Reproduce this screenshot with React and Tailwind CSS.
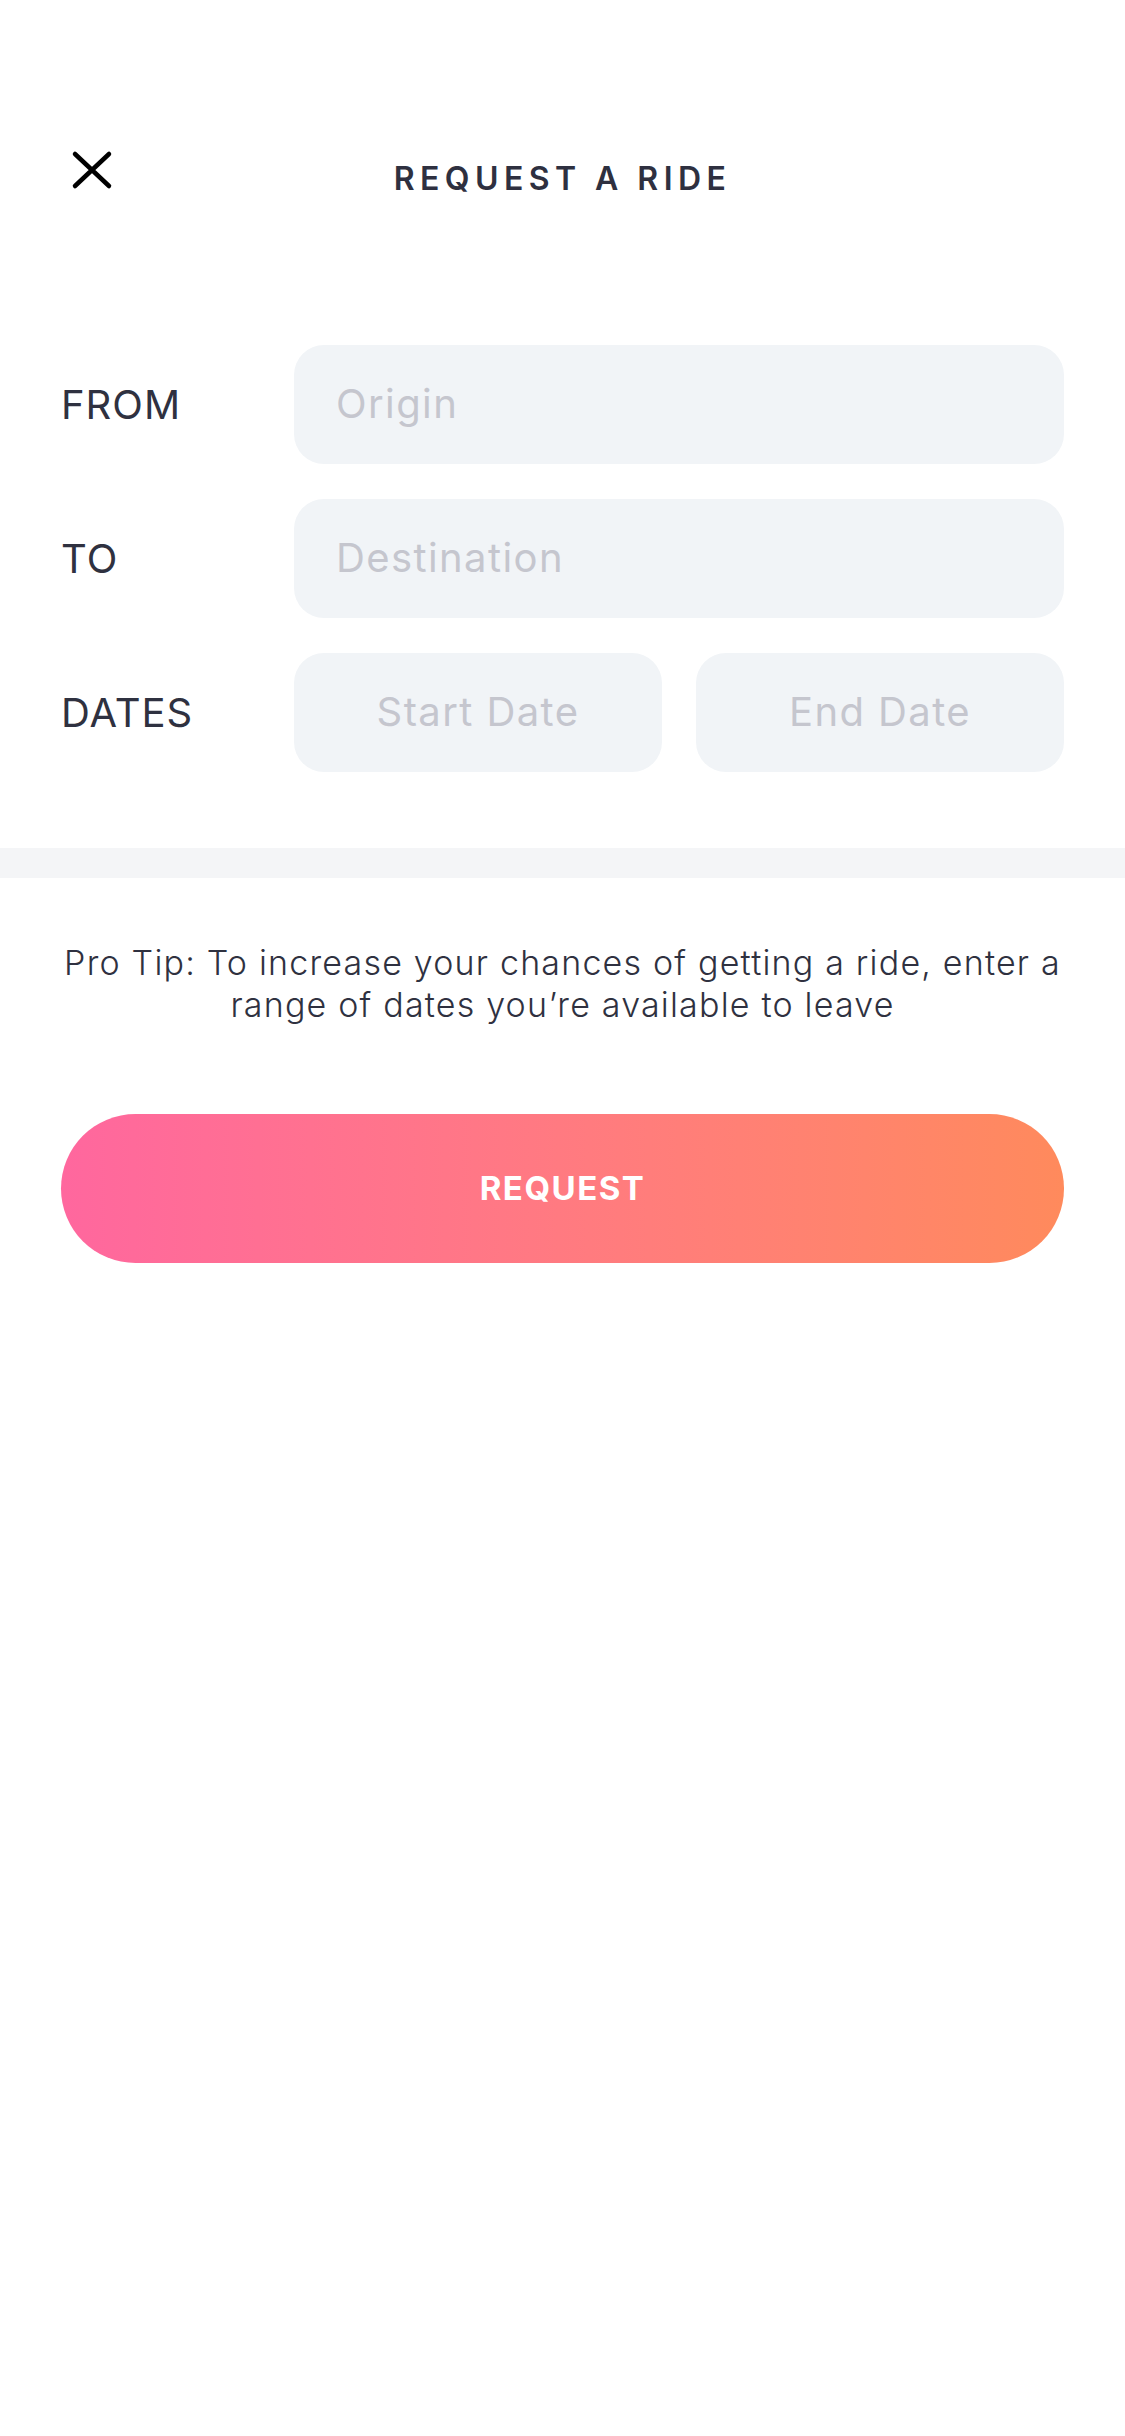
import React from 'react';

function CloseIcon() {
  return (
    <svg width="44" height="44" viewBox="0 0 44 44" fill="none">
      <path d="M4 6L38 38M38 6L4 38" stroke="#000" strokeWidth="4.5" strokeLinecap="round" />
    </svg>
  );
}

function Field({ placeholder, center }) {
  return (
    <input
      type="text"
      placeholder={placeholder}
      className={`h-[119px] w-full min-w-0 rounded-[30px] bg-[#f1f4f7] pb-[3px] text-[40px] tracking-[0.035em] text-[#2f3140] placeholder:text-[#c5c6ce] outline-none ${center ? 'text-center px-4' : 'px-[42px]'}`}
    />
  );
}

function Row({ label, children }) {
  return (
    <div className="flex items-center">
      <div className="w-[233px] shrink-0 text-[40px] leading-none tracking-[0.025em] text-[#2f3140]">{label}</div>
      <div className="flex flex-1 gap-[34px]">{children}</div>
    </div>
  );
}

export default function App() {
  return (
    <div className="min-h-screen w-full bg-white font-['Inter','Liberation_Sans',sans-serif]">
      {/* header */}
      <div className="grid grid-cols-[1fr_auto_1fr] items-start px-[71px] pt-[148px]">
        <button className="justify-self-start">
          <CloseIcon />
        </button>
        <h1 className="mt-[13px] text-[32px] font-semibold leading-[36px] tracking-[0.17em] text-[#2e3040]">
          REQUEST A RIDE
        </h1>
        <div />
      </div>

      {/* form */}
      <div className="mt-[148px] flex flex-col gap-[35px] px-[61px]">
        <Row label="FROM">
          <Field placeholder="Origin" />
        </Row>
        <Row label="TO">
          <Field placeholder="Destination" />
        </Row>
        <Row label="DATES">
          <Field placeholder="Start Date" center />
          <Field placeholder="End Date" center />
        </Row>
      </div>

      <div className="mt-[76px] h-[30px] bg-[#f4f5f7]" />

      <p className="mt-[64px] px-[30px] text-center text-[34px] font-light leading-[42px] tracking-[0.035em] text-[#2f3140]">
        Pro Tip: To increase your chances of getting a ride, enter a
        <br />
        range of dates you’re available to leave
      </p>

      <div className="mt-[88px] px-[61px]">
        <button className="flex h-[149px] w-full items-center justify-center rounded-full bg-linear-to-r from-[#ff679e] to-[#ff8a5c] text-[33px] font-bold tracking-[0.045em] text-white">
          REQUEST
        </button>
      </div>
    </div>
  );
}
